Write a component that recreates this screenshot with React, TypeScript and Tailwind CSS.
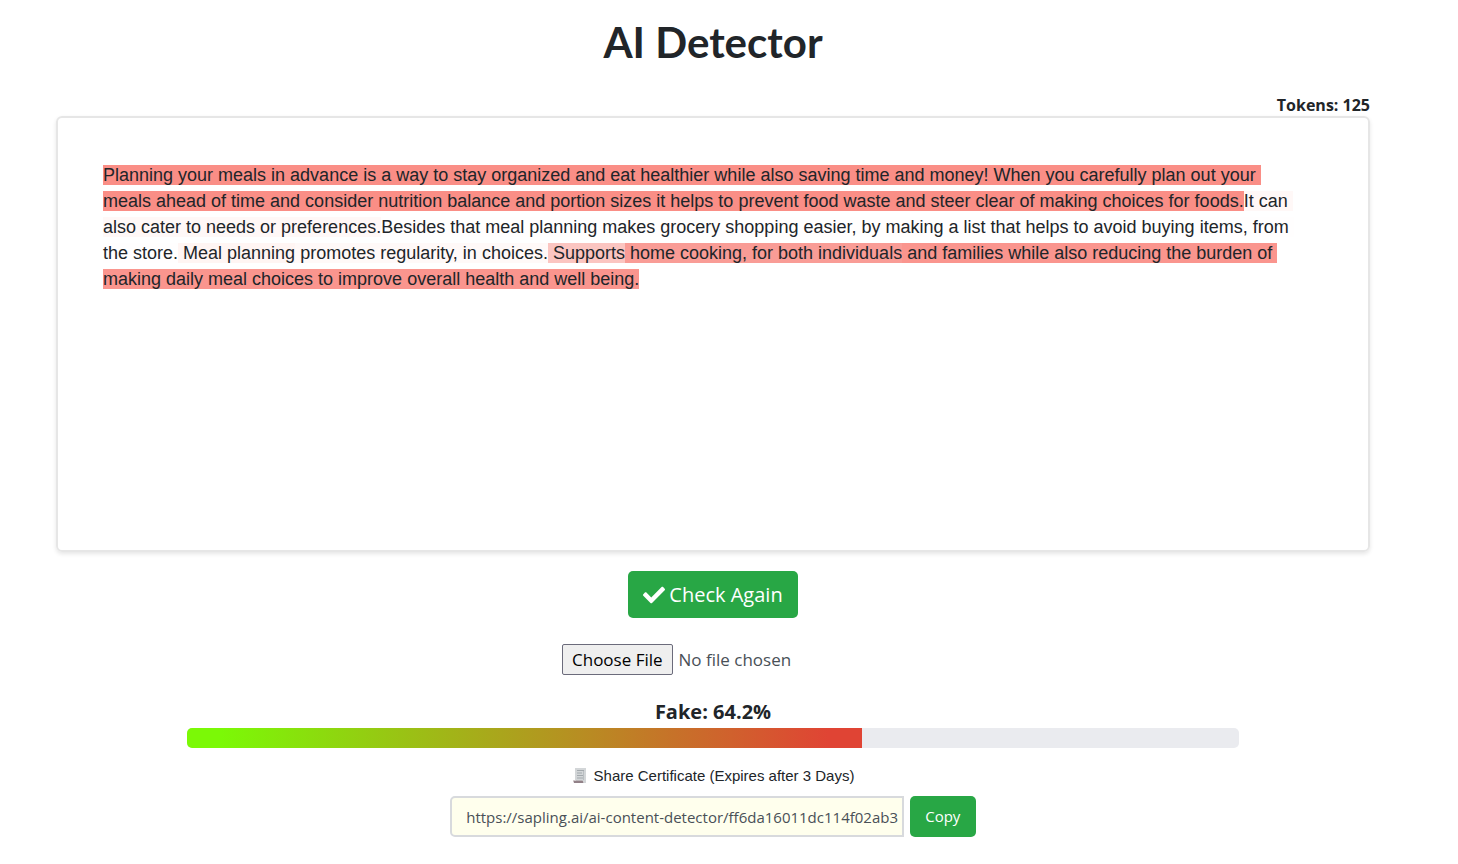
import React, { useState } from 'react';
import { FaCheck } from 'react-icons/fa';

const SCORE = 64.2;
const TOKENS = 125;
const SHARE_URL = 'https://sapling.ai/ai-content-detector/ff6da16011dc114f02ab3';

// Each run of text carries the highlight for its score
const LINES = [
  [
    {
      text: 'Planning your meals in advance is a way to stay organized and eat healthier while also saving time and money! When you carefully plan out your ',
      className: 'bg-[#fa8e86]',
    },
  ],
  [
    {
      text: 'meals ahead of time and consider nutrition balance and portion sizes it helps to prevent food waste and steer clear of making choices for foods.',
      className: 'bg-[#fa8e86]',
    },
    { text: 'It can ', className: 'bg-[#fff8f7]' },
  ],
  [
    { text: 'also cater to needs or preferences.', className: 'bg-[#fff8f7]' },
    {
      text: 'Besides that meal planning makes grocery shopping easier, by making a list that helps to avoid buying items, from ',
      className: 'bg-[#fffefe]',
    },
  ],
  [
    { text: 'the store.', className: 'bg-[#fffefe]' },
    { text: ' Meal planning', className: 'bg-[#fff5f3]' },
    { text: ' promotes regularity, in choices.', className: 'bg-[#fff9f8]' },
    { text: ' Supports', className: 'bg-[#fbc5c1]' },
    { text: ' home cooking, for both individuals', className: 'bg-[#f99c96]' },
    { text: ' and families while also reducing the burden of ', className: 'bg-[#fa958e]' },
  ],
  [
    { text: 'making daily meal choices to improve overall health and well being.', className: 'bg-[#fa958e]' },
  ],
];

const ReceiptIcon = () => (
  <svg width="16" height="16" viewBox="0 0 16 16" aria-hidden="true">
    <path d="M3 0h11v15H4V12H3z" fill="#d3d6d8" />
    <path d="M5 2.500h7M5 5h5M5 7.500h7M5 10h6" stroke="#a3a9ad" strokeWidth="1.200" fill="none" />
    <path d="M11.500 3v9" stroke="#b9bec1" strokeWidth="1" fill="none" />
    <path d="M1 12.500h9.500l1 2.500H2z" fill="#a3959a" />
    <path d="M2 14h9" stroke="#806c74" strokeWidth="1" />
  </svg>
);

const App: React.FC = () => {
  const [copied, setCopied] = useState(false);

  const handleCopy = async () => {
    try {
      await navigator.clipboard.writeText(SHARE_URL);
      setCopied(true);
    } catch (error) {
      setCopied(false);
    }
  };

  return (
    <main className="flex flex-col items-center pt-3.5 pr-[88px] pb-7 pl-14 font-['Open_Sans','Noto_Sans',sans-serif] text-[#212529]">
      <h1 className="font-['Lato',sans-serif] text-[42px] leading-[56px] font-bold">AI Detector</h1>

      <div className="mt-6 w-full text-right text-base leading-[22px] font-bold">Tokens: {TOKENS}</div>

      <div
        contentEditable
        suppressContentEditableWarning
        role="textbox"
        aria-label="Text to check"
        className="min-h-[436px] w-full rounded-md border-2 border-[#e6e6e6] px-[45px] py-11 font-['Liberation_Sans',Arial,sans-serif] text-lg leading-[26px] whitespace-pre-wrap shadow-[0_2px_4px_rgba(0,0,0,0.1)] outline-none"
      >
        {LINES.map((line, i) => (
          <div key={i}>
            {line.map((segment, j) => (
              <span key={j} className={segment.className}>{segment.text}</span>
            ))}
          </div>
        ))}
      </div>

      <button type="button" className="mt-[19px] flex h-[47px] items-center gap-1 rounded-[5px] bg-[#28a745] px-[15px] text-xl text-white hover:bg-[#218838]">
        <FaCheck size={22} />
        Check Again
      </button>

      <input
        type="file"
        aria-label="Upload a file"
        className="mt-[26px] w-[302px] text-[17px] leading-[26px] text-[#495057] file:mr-1.5 file:h-[31px] file:rounded-xs file:border file:border-solid file:border-[#6b6b7b] file:bg-[#efefef] file:px-[9px] file:text-black"
      />

      <div id="score" className="mt-[21px] text-xl leading-8 font-bold">Fake: {SCORE}%</div>
      <div
        role="progressbar"
        aria-labelledby="score"
        aria-valuenow={SCORE}
        aria-valuemin={0}
        aria-valuemax={100}
        className="h-5 w-4/5 overflow-hidden rounded-[5px] bg-[#eaebef]"
      >
        <div
          className="h-full bg-[linear-gradient(to_right,#7bf906_5%,#b78e22_58%,#e04434_95%)]"
          style={{ width: `${SCORE}%` }}
        />
      </div>

      <label htmlFor="share" className="mt-4 flex items-center gap-1.5 font-['Liberation_Sans',Arial,sans-serif] text-[15px] leading-6">
        <ReceiptIcon />
        Share Certificate (Expires after 3 Days)
      </label>
      <div className="mt-2 flex w-2/5 gap-1.5">
        <input
          id="share"
          type="text"
          readOnly
          value={SHARE_URL}
          className="h-[41px] min-w-0 flex-1 rounded-l-[5px] border-2 border-[#d8dadd] bg-[#ffffed] pr-1 pl-3.5 text-[15px] text-[#495057] outline-none"
        />
        <button type="button" onClick={handleCopy} className="h-[41px] w-[66px] rounded-[5px] bg-[#28a745] text-[15px] text-white hover:bg-[#218838]">
          {copied ? 'Copied' : 'Copy'}
        </button>
      </div>
    </main>
  );
};

export default App;
